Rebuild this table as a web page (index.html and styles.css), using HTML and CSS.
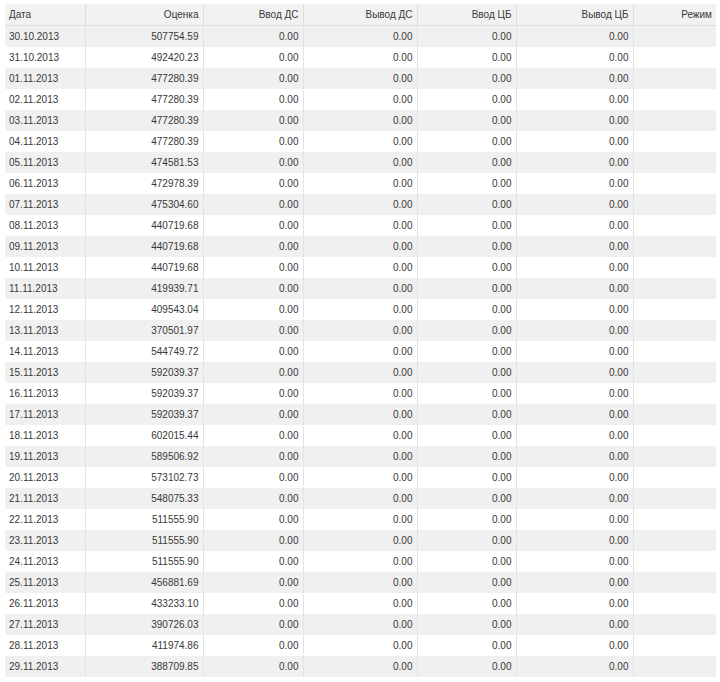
FILE: index.html
```html
<!DOCTYPE html>
<html lang="ru">
<head>
<meta charset="utf-8">
<title>Оценка</title>
<link rel="stylesheet" href="styles.css">
</head>
<body>
<table class="grid">
  <colgroup>
    <col class="c-date"><col class="c-val"><col class="c-in"><col class="c-out"><col class="c-inb"><col class="c-outb"><col class="c-mode">
  </colgroup>
  <thead>
    <tr><th class="left"><span>Дата</span></th><th><span>Оценка</span></th><th><span>Ввод ДС</span></th><th><span>Вывод ДС</span></th><th><span>Ввод ЦБ</span></th><th><span>Вывод ЦБ</span></th><th><span>Режим</span></th></tr>
  </thead>
  <tbody>
    <tr><td class="left"><span>30.10.2013</span></td><td><span>507754.59</span></td><td><span>0.00</span></td><td><span>0.00</span></td><td><span>0.00</span></td><td><span>0.00</span></td><td></td></tr>
    <tr><td class="left"><span>31.10.2013</span></td><td><span>492420.23</span></td><td><span>0.00</span></td><td><span>0.00</span></td><td><span>0.00</span></td><td><span>0.00</span></td><td></td></tr>
    <tr><td class="left"><span>01.11.2013</span></td><td><span>477280.39</span></td><td><span>0.00</span></td><td><span>0.00</span></td><td><span>0.00</span></td><td><span>0.00</span></td><td></td></tr>
    <tr><td class="left"><span>02.11.2013</span></td><td><span>477280.39</span></td><td><span>0.00</span></td><td><span>0.00</span></td><td><span>0.00</span></td><td><span>0.00</span></td><td></td></tr>
    <tr><td class="left"><span>03.11.2013</span></td><td><span>477280.39</span></td><td><span>0.00</span></td><td><span>0.00</span></td><td><span>0.00</span></td><td><span>0.00</span></td><td></td></tr>
    <tr><td class="left"><span>04.11.2013</span></td><td><span>477280.39</span></td><td><span>0.00</span></td><td><span>0.00</span></td><td><span>0.00</span></td><td><span>0.00</span></td><td></td></tr>
    <tr><td class="left"><span>05.11.2013</span></td><td><span>474581.53</span></td><td><span>0.00</span></td><td><span>0.00</span></td><td><span>0.00</span></td><td><span>0.00</span></td><td></td></tr>
    <tr><td class="left"><span>06.11.2013</span></td><td><span>472978.39</span></td><td><span>0.00</span></td><td><span>0.00</span></td><td><span>0.00</span></td><td><span>0.00</span></td><td></td></tr>
    <tr><td class="left"><span>07.11.2013</span></td><td><span>475304.60</span></td><td><span>0.00</span></td><td><span>0.00</span></td><td><span>0.00</span></td><td><span>0.00</span></td><td></td></tr>
    <tr><td class="left"><span>08.11.2013</span></td><td><span>440719.68</span></td><td><span>0.00</span></td><td><span>0.00</span></td><td><span>0.00</span></td><td><span>0.00</span></td><td></td></tr>
    <tr><td class="left"><span>09.11.2013</span></td><td><span>440719.68</span></td><td><span>0.00</span></td><td><span>0.00</span></td><td><span>0.00</span></td><td><span>0.00</span></td><td></td></tr>
    <tr><td class="left"><span>10.11.2013</span></td><td><span>440719.68</span></td><td><span>0.00</span></td><td><span>0.00</span></td><td><span>0.00</span></td><td><span>0.00</span></td><td></td></tr>
    <tr><td class="left"><span>11.11.2013</span></td><td><span>419939.71</span></td><td><span>0.00</span></td><td><span>0.00</span></td><td><span>0.00</span></td><td><span>0.00</span></td><td></td></tr>
    <tr><td class="left"><span>12.11.2013</span></td><td><span>409543.04</span></td><td><span>0.00</span></td><td><span>0.00</span></td><td><span>0.00</span></td><td><span>0.00</span></td><td></td></tr>
    <tr><td class="left"><span>13.11.2013</span></td><td><span>370501.97</span></td><td><span>0.00</span></td><td><span>0.00</span></td><td><span>0.00</span></td><td><span>0.00</span></td><td></td></tr>
    <tr><td class="left"><span>14.11.2013</span></td><td><span>544749.72</span></td><td><span>0.00</span></td><td><span>0.00</span></td><td><span>0.00</span></td><td><span>0.00</span></td><td></td></tr>
    <tr><td class="left"><span>15.11.2013</span></td><td><span>592039.37</span></td><td><span>0.00</span></td><td><span>0.00</span></td><td><span>0.00</span></td><td><span>0.00</span></td><td></td></tr>
    <tr><td class="left"><span>16.11.2013</span></td><td><span>592039.37</span></td><td><span>0.00</span></td><td><span>0.00</span></td><td><span>0.00</span></td><td><span>0.00</span></td><td></td></tr>
    <tr><td class="left"><span>17.11.2013</span></td><td><span>592039.37</span></td><td><span>0.00</span></td><td><span>0.00</span></td><td><span>0.00</span></td><td><span>0.00</span></td><td></td></tr>
    <tr><td class="left"><span>18.11.2013</span></td><td><span>602015.44</span></td><td><span>0.00</span></td><td><span>0.00</span></td><td><span>0.00</span></td><td><span>0.00</span></td><td></td></tr>
    <tr><td class="left"><span>19.11.2013</span></td><td><span>589506.92</span></td><td><span>0.00</span></td><td><span>0.00</span></td><td><span>0.00</span></td><td><span>0.00</span></td><td></td></tr>
    <tr><td class="left"><span>20.11.2013</span></td><td><span>573102.73</span></td><td><span>0.00</span></td><td><span>0.00</span></td><td><span>0.00</span></td><td><span>0.00</span></td><td></td></tr>
    <tr><td class="left"><span>21.11.2013</span></td><td><span>548075.33</span></td><td><span>0.00</span></td><td><span>0.00</span></td><td><span>0.00</span></td><td><span>0.00</span></td><td></td></tr>
    <tr><td class="left"><span>22.11.2013</span></td><td><span>511555.90</span></td><td><span>0.00</span></td><td><span>0.00</span></td><td><span>0.00</span></td><td><span>0.00</span></td><td></td></tr>
    <tr><td class="left"><span>23.11.2013</span></td><td><span>511555.90</span></td><td><span>0.00</span></td><td><span>0.00</span></td><td><span>0.00</span></td><td><span>0.00</span></td><td></td></tr>
    <tr><td class="left"><span>24.11.2013</span></td><td><span>511555.90</span></td><td><span>0.00</span></td><td><span>0.00</span></td><td><span>0.00</span></td><td><span>0.00</span></td><td></td></tr>
    <tr><td class="left"><span>25.11.2013</span></td><td><span>456881.69</span></td><td><span>0.00</span></td><td><span>0.00</span></td><td><span>0.00</span></td><td><span>0.00</span></td><td></td></tr>
    <tr><td class="left"><span>26.11.2013</span></td><td><span>433233.10</span></td><td><span>0.00</span></td><td><span>0.00</span></td><td><span>0.00</span></td><td><span>0.00</span></td><td></td></tr>
    <tr><td class="left"><span>27.11.2013</span></td><td><span>390726.03</span></td><td><span>0.00</span></td><td><span>0.00</span></td><td><span>0.00</span></td><td><span>0.00</span></td><td></td></tr>
    <tr><td class="left"><span>28.11.2013</span></td><td><span>411974.86</span></td><td><span>0.00</span></td><td><span>0.00</span></td><td><span>0.00</span></td><td><span>0.00</span></td><td></td></tr>
    <tr><td class="left"><span>29.11.2013</span></td><td><span>388709.85</span></td><td><span>0.00</span></td><td><span>0.00</span></td><td><span>0.00</span></td><td><span>0.00</span></td><td></td></tr>
  </tbody>
</table>
</body>
</html>
```

FILE: styles.css
```css
html, body {
  margin: 0;
  padding: 0;
  background: #ffffff;
}

body {
  padding: 4px 0 0 5px;
  font-family: "Liberation Sans", Arial, sans-serif;
  font-size: 10px;
  line-height: 14px;
  color: #383838;
}

.grid {
  width: 711px;
  border-collapse: collapse;
  table-layout: fixed;
}

.c-date { width: 80px; }
.c-val { width: 118px; }
.c-in { width: 100px; }
.c-out { width: 114px; }
.c-inb { width: 99px; }
.c-outb { width: 117px; }
.c-mode { width: 83px; }

.grid th,
.grid td {
  padding: 0 4px;
  text-align: right;
  white-space: nowrap;
  overflow: hidden;
  border-left: 1px solid #e3e3e3;
}

.grid th span,
.grid td span {
  display: inline-block;
  transform: scaleY(1.16);
  transform-origin: 50% 55%;
}

.grid th:first-child,
.grid td:first-child {
  border-left: none;
}

.grid th {
  height: 21px;
  font-weight: normal;
  background: #f2f2f2;
  border-bottom: 1px solid #dcdcdc;
  border-left-color: #dddddd;
}

.grid td {
  height: 21px;
}

.grid tbody tr:nth-child(odd) td {
  background: #f0f0f0;
}

.grid .left {
  text-align: left;
}
```
